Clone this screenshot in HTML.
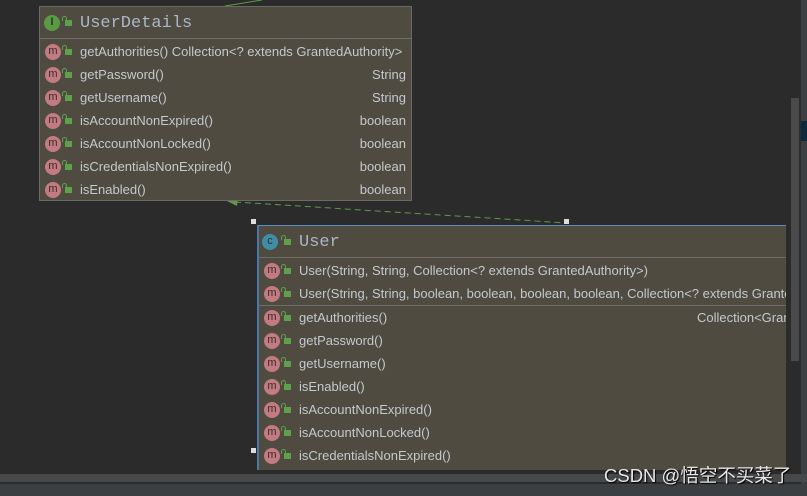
<!DOCTYPE html>
<html><head><style>
*{margin:0;padding:0;box-sizing:border-box}
body{width:807px;height:496px;background:#2b2b2b;position:relative;overflow:hidden;font-family:"Liberation Sans",sans-serif;font-size:13px;color:#c3c9d0}
.box{position:absolute;background:#4f4b40;border:1px solid #6a6a66}
.hd{height:32px;position:relative;border-bottom:1px solid #6e6c66}
.title{position:absolute;left:40px;top:7px;font-family:"Liberation Mono","DejaVu Sans Mono",monospace;font-size:17px;color:#a9b7c6}
.row{height:23px;position:relative;white-space:nowrap}
.row .n{position:absolute;left:40px;top:4px}
.row .t{position:absolute;right:5px;top:4px}
.ic{position:absolute;width:16px;height:16px;border-radius:50%;font-size:11px;color:#3a2a2a;text-align:center;line-height:15px;font-family:"Liberation Sans",sans-serif}
.m{background:#c27b80;left:5px;top:4px}
.lk{position:absolute;left:25px;top:9px;width:7px;height:6px;background:#5fa04a}
.lk:before{content:"";position:absolute;left:-3px;top:-4px;width:3px;height:4px;border:1.5px solid #5fa04a;border-bottom:none;border-radius:3px 3px 0 0}
.sep{border-top:1px solid #6e6c66}
.sq{position:absolute;width:5px;height:5px;background:#ddd}
</style></head><body>
<svg width="807" height="496" style="position:absolute;left:0;top:0">
<line x1="225" y1="6" x2="262" y2="0" stroke="#5e9a4a" stroke-width="1"/>
<line x1="235" y1="202" x2="567" y2="223" stroke="#5e9a4a" stroke-width="1" stroke-dasharray="6,4"/>
<polygon points="227,201 238,198 237,206" fill="#5e9a4a"/>
</svg>
<div class="box" style="left:39px;top:6px;width:373px;height:195px">
<div class="hd"><div class="ic" style="background:#5b9a45;left:4px;top:8px;font-weight:bold;color:#2a3a20">I</div><div class="lk" style="top:13px"></div><div class="title">UserDetails</div></div>
<div class="row" style="margin-top:1px"><div class="ic m">m</div><div class="lk"></div><span class="n">getAuthorities() Collection&lt;? extends GrantedAuthority&gt;</span></div>
<div class="row"><div class="ic m">m</div><div class="lk"></div><span class="n">getPassword()</span><span class="t">String</span></div>
<div class="row"><div class="ic m">m</div><div class="lk"></div><span class="n">getUsername()</span><span class="t">String</span></div>
<div class="row"><div class="ic m">m</div><div class="lk"></div><span class="n">isAccountNonExpired()</span><span class="t">boolean</span></div>
<div class="row"><div class="ic m">m</div><div class="lk"></div><span class="n">isAccountNonLocked()</span><span class="t">boolean</span></div>
<div class="row"><div class="ic m">m</div><div class="lk"></div><span class="n">isCredentialsNonExpired()</span><span class="t">boolean</span></div>
<div class="row"><div class="ic m">m</div><div class="lk"></div><span class="n">isEnabled()</span><span class="t">boolean</span></div>
</div>
<div class="sq" style="left:251px;top:219px"></div><div class="sq" style="left:564px;top:219px"></div><div class="sq" style="left:251px;top:448px"></div>
<div class="box" style="left:257px;top:225px;width:529px;height:245px;border:none;border-left:2px solid #4a78a8;border-top:1px solid #5f8fc0;overflow:hidden">
<div class="hd"><div class="ic" style="background:#3f8ea8;left:3px;top:8px">c</div><div class="lk" style="top:13px"></div><div class="title">User</div></div>
<div class="row" style="margin-top:1px"><div class="ic m">m</div><div class="lk"></div><span class="n">User(String, String, Collection&lt;? extends GrantedAuthority&gt;)</span></div>
<div class="row"><div class="ic m">m</div><div class="lk"></div><span class="n">User(String, String, boolean, boolean, boolean, boolean, Collection&lt;? extends GrantedAuthority&gt;)</span></div>
<div class="sep"></div>
<div class="row"><div class="ic m">m</div><div class="lk"></div><span class="n">getAuthorities()</span><span class="t" style="left:438px;right:auto">Collection&lt;GrantedAuthority&gt;</span></div>
<div class="row"><div class="ic m">m</div><div class="lk"></div><span class="n">getPassword()</span></div>
<div class="row"><div class="ic m">m</div><div class="lk"></div><span class="n">getUsername()</span></div>
<div class="row"><div class="ic m">m</div><div class="lk"></div><span class="n">isEnabled()</span></div>
<div class="row"><div class="ic m">m</div><div class="lk"></div><span class="n">isAccountNonExpired()</span></div>
<div class="row"><div class="ic m">m</div><div class="lk"></div><span class="n">isAccountNonLocked()</span></div>
<div class="row"><div class="ic m">m</div><div class="lk"></div><span class="n">isCredentialsNonExpired()</span></div>
</div>
<div style="position:absolute;left:791px;top:98px;width:8px;height:263px;background:#4a4a4a"></div>
<div style="position:absolute;left:801px;top:0;width:6px;height:496px;background:#3c3f41"></div>
<div style="position:absolute;left:801px;top:121px;width:6px;height:20px;background:#0d293e"></div>
<div style="position:absolute;left:0;top:474px;width:807px;height:8px;background:#46484a"></div>
<div style="position:absolute;left:0;top:484px;width:807px;height:12px;background:#3c3f41"></div>
<div style="position:absolute;left:604px;top:462px;font-family:'Liberation Sans','Noto Sans CJK SC',sans-serif;font-size:18.5px;color:#e6e6e6;text-shadow:1px 1px 1px #000;white-space:nowrap">CSDN @悟空不买菜了</div>
</body></html>
